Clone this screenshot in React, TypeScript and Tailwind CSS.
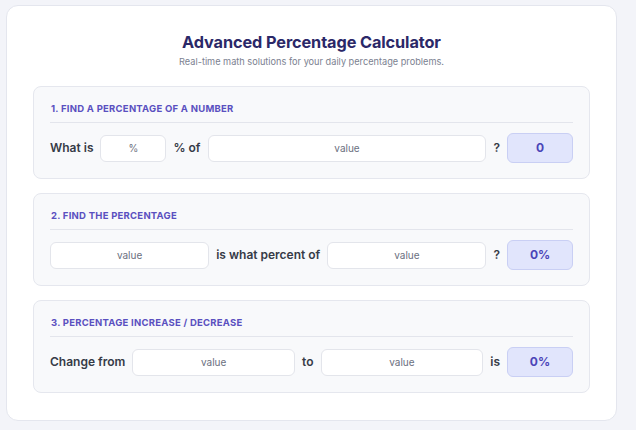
const font = { fontFamily: "Inter, 'Noto Sans', sans-serif" };

export default function App() {
  return (
    <main className="min-h-screen w-full bg-[#f3f4f9] px-[6px] pt-[5px] pb-2" style={font}>
      <div className="w-[611px] rounded-xl border border-[#e4e6ee] bg-white px-[26px] pt-[27px] pb-[27px]">
        {/* Header */}
        <div className="text-center">
          <h1 className="text-[16.3px] font-bold leading-[18px] text-[#2b2868] tracking-[-0.1px]">
            Advanced Percentage Calculator
          </h1>
          <p className="mt-[5px] text-[9.2px] leading-[11px] text-[#7b8190]">
            Real-time math solutions for your daily percentage problems.
          </p>
        </div>

        <div className="mt-[19px] flex flex-col gap-[14px]">
          <Section title="1. Find a percentage of a number">
            <Label>What is</Label>
            <Field placeholder="%" className="w-[66px]" />
            <Label>% of</Label>
            <Field placeholder="value" className="flex-1" />
            <Label>?</Label>
            <Result value="0" />
          </Section>

          <Section title="2. Find the percentage">
            <Field placeholder="value" className="flex-1" />
            <Label>is what percent of</Label>
            <Field placeholder="value" className="flex-1" />
            <Label>?</Label>
            <Result value="0%" />
          </Section>

          <Section title="3. Percentage increase / decrease">
            <Label>Change from</Label>
            <Field placeholder="value" className="flex-1" />
            <Label>to</Label>
            <Field placeholder="value" className="flex-1" />
            <Label>is</Label>
            <Result value="0%" />
          </Section>
        </div>
      </div>
    </main>
  );
}

function Section({ title, children }: { title: string; children: React.ReactNode }) {
  return (
    <section className="rounded-lg border border-[#e5e7ee] bg-[#f8f9fb] px-[16px] pt-[16px] pb-[15px]">
      <h2 className="border-b border-[#e3e5ec] pb-[7px] pl-[1px] text-[9.5px] font-bold uppercase leading-[12px] tracking-[0.25px] text-[#5a50c0]">
        {title}
      </h2>
      <div className="mt-[10px] flex h-[30px] items-center gap-[7px]">{children}</div>
    </section>
  );
}

function Label({ children }: { children: React.ReactNode }) {
  return <span className="shrink-0 text-[12px] font-semibold text-[#363b47]">{children}</span>;
}

function Field({ placeholder, className }: { placeholder: string; className?: string }) {
  return (
    <input
      placeholder={placeholder}
      style={font}
      className={`h-[27px] min-w-0 rounded-md border border-[#e3e5eb] bg-white text-center text-[10px] text-[#374151] placeholder:text-[#6b7080] outline-none ${className ?? ""}`}
    />
  );
}

function Result({ value }: { value: string }) {
  return (
    <div className="flex h-[30px] w-[66px] shrink-0 items-center justify-center rounded-md border border-[#c9cff4] bg-[#e1e5fc] text-[12px] font-bold text-[#4b44b8]">
      {value}
    </div>
  );
}
